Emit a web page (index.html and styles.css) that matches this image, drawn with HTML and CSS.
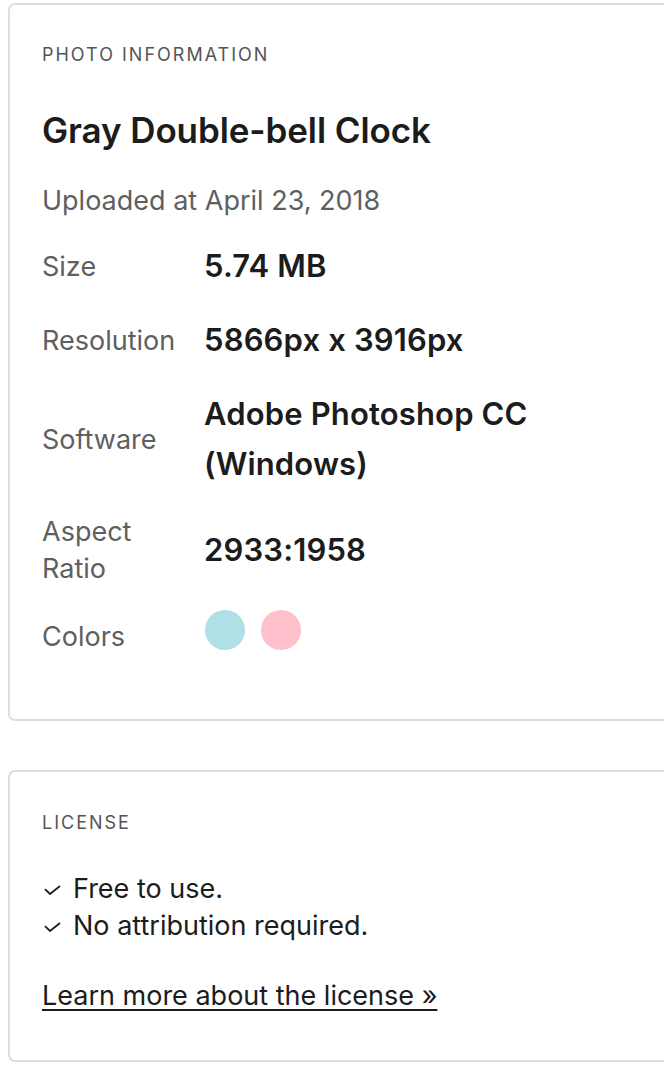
FILE: index.html
```html
<!DOCTYPE html>
<html lang="en">
<head>
<meta charset="utf-8">
<title>Photo information</title>
<link rel="stylesheet" href="styles.css">
</head>
<body>
  <main class="sidebar">
    <section class="card card-info">
      <h2 class="card-label">Photo Information</h2>
      <h1 class="photo-title">Gray Double-bell Clock</h1>
      <p class="uploaded">Uploaded at April 23, 2018</p>
      <dl class="meta">
        <dt>Size</dt>
        <dd>5.74 MB</dd>
        <dt>Resolution</dt>
        <dd>5866px x 3916px</dd>
        <dt>Software</dt>
        <dd>Adobe Photoshop CC<br>(Windows)</dd>
        <dt>Aspect<br>Ratio</dt>
        <dd>2933:1958</dd>
        <dt>Colors</dt>
        <dd class="swatches">
          <span class="swatch swatch-blue"></span>
          <span class="swatch swatch-pink"></span>
        </dd>
      </dl>
    </section>

    <section class="card card-license">
      <h2 class="card-label">License</h2>
      <ul class="checks">
        <li><svg class="check" viewBox="0 0 17 10" aria-hidden="true"><path d="M1 4.2 L6 9 L16 1"/></svg>Free to use.</li>
        <li><svg class="check" viewBox="0 0 17 10" aria-hidden="true"><path d="M1 4.2 L6 9 L16 1"/></svg>No attribution required.</li>
      </ul>
      <a class="license-link" href="#">Learn more about the license »</a>
    </section>
  </main>
</body>
</html>
```

FILE: styles.css
```css
html, body {
  margin: 0;
  padding: 0;
  background: #ffffff;
  overflow: hidden;
}

body {
  font-family: Inter, "Noto Sans", "Liberation Sans", sans-serif;
  color: #222222;
}

.sidebar {
  padding: 3px 0 0 8px;
  display: flex;
  flex-direction: column;
  gap: 49px;
}

.card {
  width: 720px;
  border: 2px solid #dddddd;
  border-radius: 7px;
  padding: 38px 32px 46px 32px;
  box-sizing: border-box;
  display: flex;
  flex-direction: column;
  align-items: flex-start;
}

.card-license {
  padding-top: 39px;
  padding-bottom: 46px;
}

.card-label {
  margin: 0;
  font-size: 18px;
  line-height: 24px;
  font-weight: 400;
  letter-spacing: 2px;
  text-transform: uppercase;
  color: #555555;
}

.photo-title {
  margin: 43px 0 0 0;
  font-size: 35px;
  line-height: 40px;
  font-weight: 600;
  color: #1c1c1c;
  letter-spacing: -0.1px;
}

.uploaded {
  margin: 32px 0 0 0;
  font-size: 27px;
  line-height: 37px;
  color: #5f5f5f;
}

.meta {
  margin: 10px 0 0 0;
  display: grid;
  grid-template-columns: 162px auto;
  align-items: center;
}

.meta dt {
  padding: 12px 0;
  font-size: 27px;
  line-height: 37px;
  color: #5f5f5f;
}

.meta dd {
  margin: 0;
  padding: 12px 0;
  font-size: 31px;
  line-height: 50px;
  font-weight: 600;
  color: #1c1c1c;
  letter-spacing: 0.15px;
}

.meta .swatches {
  display: flex;
  gap: 16px;
  align-self: start;
  padding: 11px 0 23px 1px;
}

.swatch {
  width: 40px;
  height: 40px;
  border-radius: 50%;
}

.swatch-blue { background: #b0dfe5; }
.swatch-pink { background: #ffc0cb; }

.checks {
  list-style: none;
  margin: 35px 0 0 0;
  padding: 0;
}

.checks li {
  display: flex;
  align-items: center;
  font-size: 27px;
  line-height: 37px;
  color: #1c1c1c;
}

.check {
  width: 17px;
  height: 10px;
  margin: 2px 12px 0 2px;
  fill: none;
  stroke: #1c1c1c;
  stroke-width: 1.8;
}

.license-link {
  margin-top: 33px;
  font-size: 27px;
  line-height: 37px;
  color: #1c1c1c;
  text-decoration: underline;
  text-underline-offset: 4px;
  text-decoration-thickness: 2px;
}
```
